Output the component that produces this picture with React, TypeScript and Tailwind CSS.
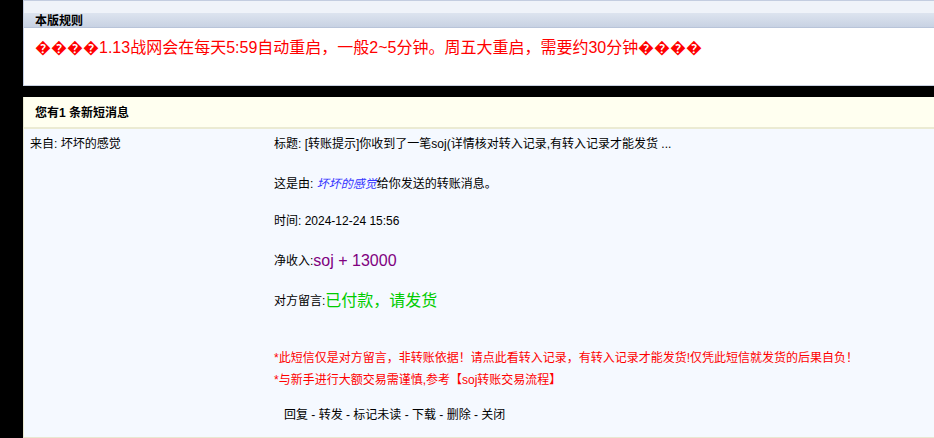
import React from "react";

const font = { fontFamily: '"Liberation Sans", Arial, "Noto Sans CJK SC", sans-serif' };

export default function App() {
  const bad = "\uFFFD\uFFFD\uFFFD\uFFFD";
  return (
    <div className="w-[934px] h-[438px] bg-black overflow-hidden text-[12px] text-black" style={font}>
      <div className="ml-[23px] flex flex-col">
        {/* top rules panel */}
        <div className="border-t border-l border-[#c3cde0] bg-white">
          <div className="h-[12px] bg-[#eff3f9]" />
          <div className="h-[15px] bg-gradient-to-b from-[#dde4ef] to-[#c8d2e3] border-b border-[#b8c4d9] pl-[11px] pt-[1px] flex items-center font-bold leading-[14px]">
            本版规则
          </div>
          <div className="h-[58px] pl-[11px] pt-[11px] text-[16px] leading-[18px] text-[#ff0000] border-b border-[#c8d0e0]">
            {bad}1.13战网会在每天5:59自动重启，一般2~5分钟。周五大重启，需要约30分钟{bad}
          </div>
        </div>
        <div className="h-[11px]" />
        {/* message panel */}
        <div className="border-l border-[#e8e8d0] bg-[#f5f9ff] h-[341px] flex flex-col border-b">
          <div className="h-[32px] bg-[#fffff0] border-b-2 border-[#ebebd3] pl-[11px] pt-[2px] flex items-center font-bold">
            您有1 条新短消息
          </div>
          <div className="flex flex-1">
            <div className="w-[250px] pl-[6px] pt-[6px] leading-[18px]">来自: 坏坏的感觉</div>
            <div className="flex flex-col pt-[6px] leading-[18px]">
              <div className="h-[18px]">标题: [转账提示]你收到了一笔soj(详情核对转入记录,有转入记录才能发货 ...</div>
              <div className="h-[18px] mt-[22px]">
                这是由: <span className="italic text-[#3333ff]">坏坏的感觉</span>给你发送的转账消息。
              </div>
              <div className="h-[18px] mt-[19px]">时间: 2024-12-24 15:56</div>
              <div className="h-[18px] mt-[22px] flex items-center">
                净收入:<span className="text-[16px] text-[#800080]">soj + 13000</span>
              </div>
              <div className="h-[18px] mt-[22px] flex items-center">
                对方留言:<span className="text-[16px] text-[#00cc00]">已付款，请发货</span>
              </div>
              <div className="h-[18px] mt-[39px] text-[#ff0000]">
                *此短信仅是对方留言，非转账依据！请点此看转入记录，有转入记录才能发货!仅凭此短信就发货的后果自负！
              </div>
              <div className="h-[18px] mt-[4px] text-[#ff0000]">
                *与新手进行大额交易需谨慎,参考【soj转账交易流程】
              </div>
              <div className="h-[18px] mt-[17px] pl-[10px]">
                回复 - 转发 - 标记未读 - 下载 - 删除 - 关闭
              </div>
            </div>
          </div>
        </div>
      </div>
    </div>
  );
}
